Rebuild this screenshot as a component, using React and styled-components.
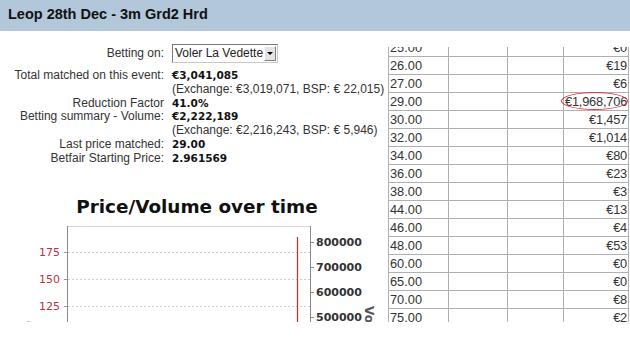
import React from "react";
import styled, { createGlobalStyle } from "styled-components";

const GlobalStyle = createGlobalStyle`
  html, body {
    margin: 0;
    padding: 0;
    background: #fff;
  }
  body {
    font-family: "Liberation Sans", Arial, sans-serif;
    color: #333;
  }
`;

const Page = styled.div`
  width: 630px;
  height: 338px;
  overflow: hidden;
  background: #fff;
`;

const TitleBar = styled.div`
  height: 31px;
  background: #b2c7d9;
  display: flex;
  align-items: center;
  padding: 0 8px 3px;
  box-sizing: border-box;
  font-size: 14.5px;
  font-weight: bold;
  color: #111;
`;

const Body = styled.div`
  display: flex;
  height: 291px;
  overflow: hidden;
`;

const LeftPanel = styled.div`
  width: 388px;
  flex: none;
  padding-top: 13px;
  box-sizing: border-box;
`;

const InfoGrid = styled.div`
  display: grid;
  grid-template-columns: 164px auto;
  column-gap: 8px;
  font-size: 12px;
  line-height: 13.8px;
  white-space: nowrap;
`;

const Label = styled.div`
  text-align: right;
  color: #333;
`;

const Value = styled.div`
  color: ${(p) => (p.$bold ? "#111" : "#333")};
  font-family: ${(p) => (p.$bold ? '"DejaVu Sans", Verdana, sans-serif' : "inherit")};
  font-size: ${(p) => (p.$bold ? "10.5px" : "12px")};
  font-weight: ${(p) => (p.$bold ? "bold" : "normal")};
`;

const SelectRow = styled.div`
  display: contents;
  & > div {
    display: flex;
    align-items: center;
    justify-content: flex-end;
    height: 19px;
    margin-bottom: 6px;
  }
  & > div:last-child {
    justify-content: flex-start;
  }
`;

const FakeSelect = styled.div`
  display: flex;
  align-items: stretch;
  width: 106px;
  height: 19px;
  box-sizing: border-box;
  border: 1px solid #7a7a7a;
  border-right-color: #c8c8c8;
  border-bottom-color: #c8c8c8;
  background: #fff;
  font-size: 12px;
  color: #222;
`;

const SelectText = styled.span`
  flex: 1;
  padding-left: 2px;
  line-height: 17px;
`;

const SelectButton = styled.span`
  width: 13px;
  margin: 1px;
  background: #e4e4e4;
  border: 1px solid #fff;
  border-right-color: #808080;
  border-bottom-color: #808080;
  box-sizing: border-box;
  display: flex;
  align-items: center;
  justify-content: center;
  &::after {
    content: "";
    border-left: 3px solid transparent;
    border-right: 3px solid transparent;
    border-top: 3px solid #000;
  }
`;

const ChartTitle = styled.div`
  margin-top: 30px;
  padding-left: 6px;
  text-align: center;
  font-family: "DejaVu Sans", Verdana, sans-serif;
  font-weight: bold;
  font-size: 18.4px;
  line-height: 22px;
  color: #111;
`;

const ChartSvg = styled.svg`
  display: block;
`;

const TablePanel = styled.div`
  width: 242px;
  flex: none;
  margin-top: 16px;
  height: 275px;
  overflow: hidden;
`;

const PriceTable = styled.table`
  margin-top: -9px;
  width: 241px;
  border-collapse: collapse;
  table-layout: fixed;
  font-size: 12.8px;
  color: #333;
`;

const Cell = styled.td`
  border: 1px solid #b0b0b0;
  height: 17px;
  padding: 0 1px;
  line-height: 17px;
  text-align: ${(p) => (p.$right ? "right" : "left")};
  white-space: nowrap;
  overflow: visible;
  position: relative;
  letter-spacing: ${(p) => (p.$right ? "-0.2px" : "0")};
`;

const Circle = styled.span`
  position: absolute;
  right: 0;
  top: -1px;
  width: 67px;
  height: 18px;
  box-sizing: border-box;
  border: 1px solid #e0313a;
  border-radius: 50%;
`;

const rows = [
  ["25.00", "€0"],
  ["26.00", "€19"],
  ["27.00", "€6"],
  ["29.00", "€1,968,706", true],
  ["30.00", "€1,457"],
  ["32.00", "€1,014"],
  ["34.00", "€80"],
  ["36.00", "€23"],
  ["38.00", "€3"],
  ["44.00", "€13"],
  ["46.00", "€4"],
  ["48.00", "€53"],
  ["60.00", "€0"],
  ["65.00", "€0"],
  ["70.00", "€8"],
  ["75.00", "€2"],
  ["80.00", "€1"],
];

const leftTicks = [
  { y: 34, label: "175" },
  { y: 61, label: "150" },
  { y: 88, label: "125" },
];

const rightTicks = [
  { y: 24, label: "800000" },
  { y: 49, label: "700000" },
  { y: 74, label: "600000" },
  { y: 99, label: "500000" },
];

const Chart = () => (
  <ChartSvg width="388" height="105" viewBox="0 0 388 105">
    <line x1="67.5" y1="8.5" x2="310.5" y2="8.5" stroke="#d4d4d4" />
    {leftTicks.map((t) => (
      <g key={t.label}>
        <line x1="68" y1={t.y + 0.5} x2="310" y2={t.y + 0.5} stroke="#cfcfcf" strokeDasharray="2 2" />
        <line x1="64" y1={t.y + 0.5} x2="67" y2={t.y + 0.5} stroke="#999" />
        <text x="60" y={t.y + 4} textAnchor="end" fontSize="11"
          fontFamily="DejaVu Sans, sans-serif" fill="#c0303a">{t.label}</text>
      </g>
    ))}
    <line x1="67.5" y1="8" x2="67.5" y2="105" stroke="#8a8a8a" />
    <line x1="310.5" y1="8" x2="310.5" y2="105" stroke="#8a8a8a" />
    {rightTicks.map((t) => (
      <g key={t.label}>
        <line x1="311" y1={t.y + 0.5} x2="314" y2={t.y + 0.5} stroke="#8a8a8a" />
        <text x="316" y={t.y + 4} fontSize="11" fontWeight="bold"
          fontFamily="DejaVu Sans, sans-serif" fill="#333">{t.label}</text>
      </g>
    ))}
    <line x1="297.5" y1="19" x2="297.5" y2="105" stroke="#d02828" strokeWidth="1.2" />
    <text transform="translate(32 137) rotate(-90)" fontSize="12" fontWeight="bold"
      fontFamily="DejaVu Sans, sans-serif" fill="#c0303a">Price</text>
    <text transform="translate(365 88) rotate(90)" fontSize="12" fontWeight="bold"
      fontFamily="DejaVu Sans, sans-serif" fill="#555">Volume</text>
  </ChartSvg>
);

const App = () => {
  return (
    <>
      <GlobalStyle />
      <Page>
        <TitleBar>Leop 28th Dec - 3m Grd2 Hrd</TitleBar>
        <Body>
          <LeftPanel>
            <InfoGrid>
              <SelectRow>
                <Label>Betting on:</Label>
                <div>
                  <FakeSelect>
                    <SelectText>Voler La Vedette</SelectText>
                    <SelectButton />
                  </FakeSelect>
                </div>
              </SelectRow>
              <Label>Total matched on this event:</Label>
              <Value $bold>€3,041,085</Value>
              <Label />
              <Value>(Exchange: €3,019,071, BSP: € 22,015)</Value>
              <Label>Reduction Factor</Label>
              <Value $bold>41.0%</Value>
              <Label>Betting summary - Volume:</Label>
              <Value $bold>€2,222,189</Value>
              <Label />
              <Value>(Exchange: €2,216,243, BSP: € 5,946)</Value>
              <Label>Last price matched:</Label>
              <Value $bold>29.00</Value>
              <Label>Betfair Starting Price:</Label>
              <Value $bold>2.961569</Value>
            </InfoGrid>
            <ChartTitle>Price/Volume over time</ChartTitle>
            <Chart />
          </LeftPanel>
          <TablePanel>
            <PriceTable>
              <colgroup>
                <col style={{ width: 60 }} />
                <col style={{ width: 59 }} />
                <col style={{ width: 56 }} />
                <col />
              </colgroup>
              <tbody>
                {rows.map(([odds, vol, marked]) => (
                  <tr key={odds}>
                    <Cell>{odds}</Cell>
                    <Cell />
                    <Cell />
                    <Cell $right>
                      {vol}
                      {marked && <Circle />}
                    </Cell>
                  </tr>
                ))}
              </tbody>
            </PriceTable>
          </TablePanel>
        </Body>
      </Page>
    </>
  );
};

export default App;
